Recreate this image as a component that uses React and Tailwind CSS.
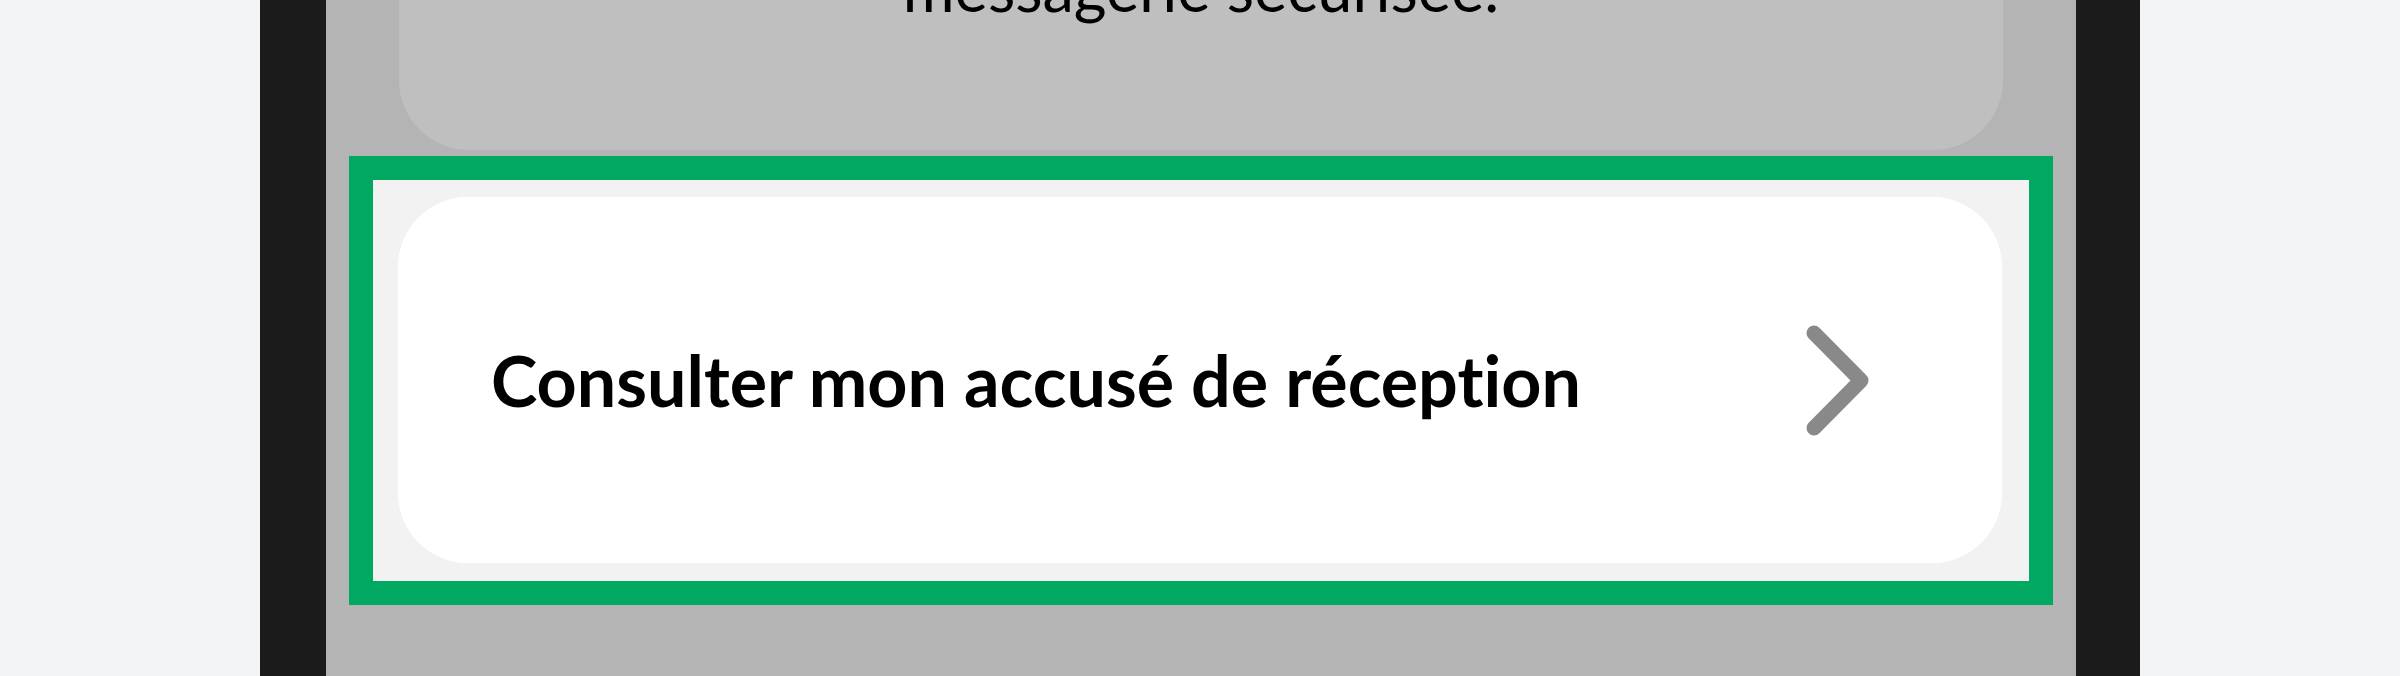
import React from "react";

export default function App() {
  return (
    <div className="w-full h-[676px] bg-[#f2f4f8] flex justify-center overflow-hidden">
      <div className="w-[1880px] h-full bg-[#1b1b1b] pl-[66px] pr-[64px]">
        <div className="h-full bg-[#b4b4b4] flex flex-col items-center">
          <div className="w-[1604px] h-[150px] shrink-0 bg-[#bfbfbf] rounded-b-[70px] flex justify-center overflow-hidden">
            <p
              className="mt-[-44px] text-[63px] leading-none text-black whitespace-nowrap [font-variant-ligatures:none]"
              style={{ fontFamily: "Lato, 'Noto Sans', sans-serif" }}
            >
              messagerie sécurisée.
            </p>
          </div>
          <div className="mt-[6px] w-[1704px] h-[449px] shrink-0 border-[24px] border-[#00a862] bg-[#f2f2f2] pt-[17px] pl-[25px]">
            <button className="w-[1604px] h-[366px] rounded-[70px] bg-white flex items-center justify-between pl-[93px] pr-[133px]">
              <span
                className="text-[70px] font-bold leading-none text-black whitespace-nowrap [font-variant-ligatures:none]"
                style={{ fontFamily: "Lato, 'Noto Sans', sans-serif" }}
              >
                Consulter mon accusé de réception
              </span>
              <svg width="63" height="111" viewBox="0 0 63 111" fill="none">
                <polyline
                  points="8,8 55,55.5 8,103"
                  stroke="#898989"
                  strokeWidth="15"
                  strokeLinecap="round"
                  strokeLinejoin="round"
                />
              </svg>
            </button>
          </div>
        </div>
      </div>
    </div>
  );
}
